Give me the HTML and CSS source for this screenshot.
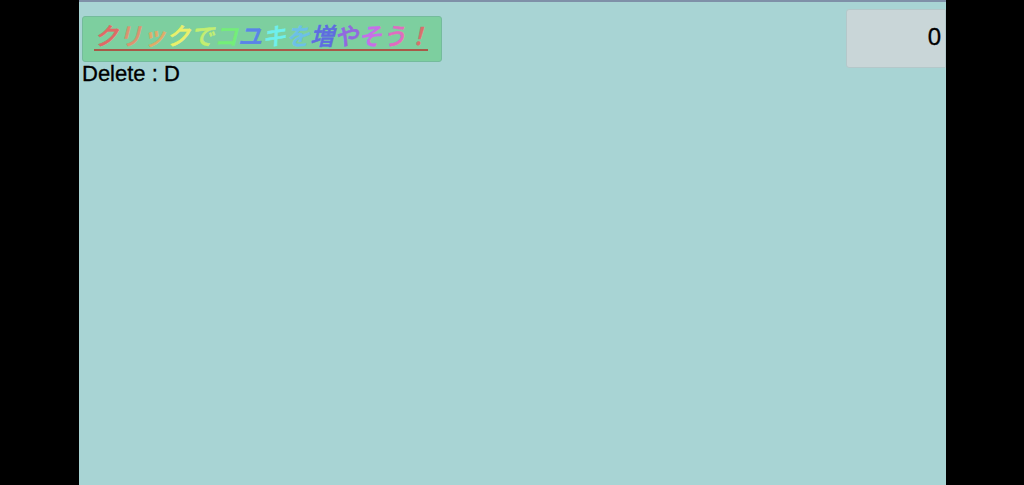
FILE: index.html
```html
<!DOCTYPE html>
<html lang="ja">
<head>
	<meta charset="UTF-8">
	<title>コユキ</title>
	<link rel="stylesheet" href="styles.css">
</head>
<body>
	<div class="stage">
		<div class="top-bar">
			<div class="left-col">
				<div class="click-btn">
					<div class="click-text"><span class="c1">ク</span><span class="c2">リ</span><span class="c3">ッ</span><span class="c4">ク</span><span class="c5">で</span><span class="c6">コ</span><span class="c7">ユ</span><span class="c8">キ</span><span class="c9">を</span><span class="c10">増</span><span class="c11">や</span><span class="c12">そ</span><span class="c13">う</span><span class="c14">！</span></div>
				</div>
				<div class="delete-hint">Delete : D</div>
			</div>
			<div class="score">0</div>
		</div>
	</div>
</body>
</html>
```

FILE: styles.css
```css
html, body {
	margin: 0;
	padding: 0;
	height: 100%;
	overflow: hidden;
}
body {
	background-color: #000;
	font-family: "Liberation Sans", "Noto Sans CJK JP", sans-serif;
}
.stage {
	width: 867px;
	height: 485px;
	margin-left: 79px;
	box-sizing: border-box;
	border-top: 2px solid #7f90a8;
	background-color: #a8d4d4;
}
.top-bar {
	display: flex;
	justify-content: space-between;
	align-items: flex-start;
	padding-left: 3px;
}
.left-col {
	padding-top: 14px;
}
.click-btn {
	width: 360px;
	height: 46px;
	box-sizing: border-box;
	padding-left: 11px;
	border: 1px solid #74bb9c;
	border-radius: 3px;
	background-color: #7dcf9f;
	font-size: 24px;
	font-style: italic;
	font-weight: 500;
	-webkit-text-stroke: 0.5px;
}
.click-text {
	width: 334px;
	height: 32px;
	line-height: 40px;
	white-space: nowrap;
	border-bottom: 2px solid #a85a48;
}
.c1 { color: #e06a66; }
.c2 { color: #dc9370; }
.c3 { color: #e0ac68; }
.c4 { color: #eaf06a; }
.c5 { color: #c4ee70; }
.c6 { color: #74ee78; }
.c7 { color: #5a84e8; }
.c8 { color: #6ef0ee; }
.c9 { color: #6cc0e8; }
.c10 { color: #5e6ce0; }
.c11 { color: #9268e0; }
.c12 { color: #c86ee8; }
.c13 { color: #e06cc0; }
.c14 { color: #d8706c; }
.delete-hint {
	font-size: 22px;
	line-height: 24px;
	color: #000;
	-webkit-text-stroke: 0.3px #000;
}
.score {
	width: 100px;
	height: 59px;
	margin-top: 7px;
	box-sizing: border-box;
	padding-right: 4px;
	border: 1px solid #b4c8ca;
	border-radius: 3px 0 0 3px;
	background-color: #c9d6d8;
	font-size: 24px;
	line-height: 54px;
	text-align: right;
	color: #000;
	-webkit-text-stroke: 0.3px #000;
}
```
